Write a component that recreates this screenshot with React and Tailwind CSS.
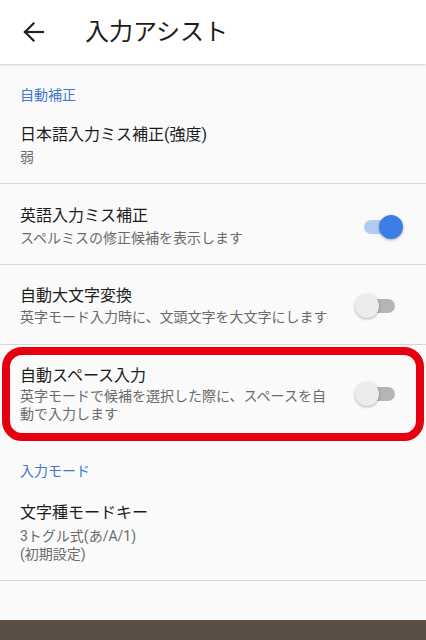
import React from "react";

const FONT = { fontFamily: 'Roboto, "Noto Sans CJK JP", sans-serif' };

function Switch({ on }) {
  return (
    <div className="relative w-[48px] h-[24px] shrink-0">
      <div
        className={
          on
            ? "absolute left-[9px] top-[5px] w-[32px] h-[14px] rounded-full bg-[#b3cbf3]"
            : "absolute left-[8px] top-[5px] w-[32px] h-[14px] rounded-full bg-[#b5b5b5]"
        }
      />
      <div
        className={
          on
            ? "absolute right-0 top-0 w-[24px] h-[24px] rounded-full bg-[#3b7ee8] shadow-[0_1px_3px_rgba(0,0,0,0.3)]"
            : "absolute left-0 top-0 w-[24px] h-[24px] rounded-full bg-[#ececec] shadow-[0_1px_3px_rgba(0,0,0,0.3)]"
        }
      />
    </div>
  );
}

function Divider() {
  return <div className="h-px bg-[#d6d6d6]" />;
}

export default function App() {
  return (
    <div className="w-[426px] h-[640px] flex flex-col bg-[#fafafa] overflow-hidden" style={FONT}>
      {/* app bar */}
      <div className="h-[64px] bg-white flex items-center shrink-0 shadow-[0_1px_2px_rgba(0,0,0,0.18)] z-10">
        <svg width="24" height="24" viewBox="0 0 24 24" className="ml-[22px]" fill="none" stroke="#222" strokeWidth="2.2" strokeLinecap="square">
          <path d="M3 12H21" />
          <path d="M11.5 3.5 3 12l8.5 8.5" />
        </svg>
        <span className="ml-[39px] text-[24px] leading-[30px] text-[#1c1c1c]">入力アシスト</span>
      </div>

      <div className="flex-1 flex flex-col">
        {/* 自動補正 */}
        <div className="pt-[21px] pl-[20px] h-[47px] text-[14px] leading-[20px] text-[#4176cf]">自動補正</div>

        <div className="pl-[20px] pt-[13px] pb-[15px]">
          <div className="text-[16px] leading-[22px] text-[#1c1c1c]">日本語入力ミス補正(強度)</div>
          <div className="text-[14px] leading-[22px] text-[#6a6a6a]">弱</div>
        </div>
        <Divider />

        <div className="pl-[20px] pr-[23px] pt-[21px] pb-[15px] flex items-center">
          <div className="flex-1">
            <div className="text-[16px] leading-[22px] text-[#1c1c1c]">英語入力ミス補正</div>
            <div className="text-[14px] leading-[22px] text-[#6a6a6a]">スペルミスの修正候補を表示します</div>
          </div>
          <Switch on />
        </div>
        <Divider />

        <div className="pl-[20px] pr-[23px] pt-[20px] pb-[17px] flex items-center">
          <div className="flex-1">
            <div className="text-[16px] leading-[22px] text-[#1c1c1c]">自動大文字変換</div>
            <div className="text-[14px] leading-[20px] text-[#6a6a6a]">英字モード入力時に、文頭文字を大文字にします</div>
          </div>
          <Switch />
        </div>
        <Divider />

        {/* highlighted item */}
        <div className="mt-[2px] mx-[2px] border-[8px] border-[#e6000f] rounded-[20px] pl-[10px] pr-[13px] pt-[10px] pb-[10px] flex items-center">
          <div className="flex-1 pr-[20px]">
            <div className="text-[16px] leading-[22px] text-[#1c1c1c]">自動スペース入力</div>
            <div className="text-[14px] leading-[18px] text-[#6a6a6a]">英字モードで候補を選択した際に、スペースを自動で入力します</div>
          </div>
          <Switch />
        </div>

        {/* 入力モード */}
        <div className="pt-[20px] pl-[20px] h-[60px] text-[14px] leading-[20px] text-[#4176cf]">入力モード</div>

        <div className="pl-[20px] pt-[1px] pb-[17px]">
          <div className="text-[16px] leading-[22px] text-[#1c1c1c]">文字種モードキー</div>
          <div className="mt-[3px] text-[14px] leading-[18px] text-[#6a6a6a]">3トグル式(あ/A/1)</div>
          <div className="text-[14px] leading-[18px] text-[#6a6a6a]">(初期設定)</div>
        </div>
        <Divider />
        <div className="flex-1" />
      </div>

      <div className="h-[20px] bg-[#5b4e45] shrink-0" />
    </div>
  );
}
